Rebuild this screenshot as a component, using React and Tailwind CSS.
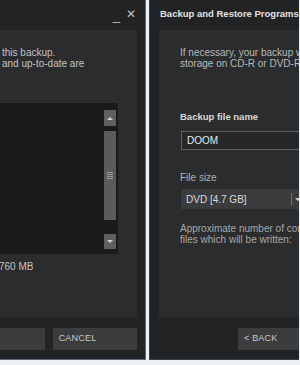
import React from 'react';

const font = "font-['Liberation_Sans',Arial,sans-serif]";

const LeftWindow = () => (
  <div className="w-[146px] h-[360px] bg-[#222324] border-r border-b border-[#5d6b78] flex flex-col overflow-hidden">
    {/* Title bar */}
    <div className="h-[30px] flex items-start justify-end pr-[9px] pt-[8px] gap-[6px] text-[#c4c4c4]">
      <span className="text-[13px] leading-[13px] mt-[1px]">_</span>
      <span className="text-[12px] leading-[12px]">✕</span>
    </div>

    {/* Content panel */}
    <div className="h-[287px] mr-[8px] bg-[#2b2c2d] flex flex-col">
      <div className="pt-[17px] pl-[2px] text-[10px] leading-[11px] text-[#c2c2c2] whitespace-nowrap">
        <div>this backup.</div>
        <div>and up-to-date are</div>
      </div>

      {/* List box */}
      <div className="mt-[34px] mr-[19px] h-[151px] bg-[#1a1a1b] flex justify-end pr-[2px] pt-[7px] pb-[5px]">
        <div className="w-[12px] flex flex-col">
          <div className="h-[16px] bg-[#5e5f60] flex items-center justify-center">
            <div className="w-0 h-0 border-l-[3px] border-r-[3px] border-b-[3px] border-l-transparent border-r-transparent border-b-[#d6d6d6]" />
          </div>
          <div className="mt-[5px] h-[89px] bg-[#5a5b5c] flex items-center justify-center">
            <div className="flex flex-col gap-[1px]">
              <div className="w-[6px] h-[1px] bg-[#9a9a9a]" />
              <div className="w-[6px] h-[1px] bg-[#9a9a9a]" />
              <div className="w-[6px] h-[1px] bg-[#9a9a9a]" />
              <div className="w-[6px] h-[1px] bg-[#9a9a9a]" />
            </div>
          </div>
          <div className="flex-1" />
          <div className="h-[15px] bg-[#5e5f60] flex items-center justify-center">
            <div className="w-0 h-0 border-l-[3px] border-r-[3px] border-t-[3px] border-l-transparent border-r-transparent border-t-[#d6d6d6]" />
          </div>
        </div>
      </div>

      <div className="mt-[7px] -ml-[1px] text-[10px] leading-[11px] text-[#c2c2c2] whitespace-nowrap">
        760 MB
      </div>
    </div>

    {/* Buttons */}
    <div className="mt-[11px] flex gap-[8px] pr-[8px]">
      <div className="w-[45px] h-[22px] bg-[#3b3c3d]" />
      <div className="w-[85px] h-[22px] bg-[#3b3c3d] flex items-center pl-[6px] text-[9px] text-[#c8c8c8] tracking-[0.2px]">
        CANCEL
      </div>
    </div>
  </div>
);

const RightWindow = () => (
  <div className="w-[150px] h-[360px] bg-[#222324] border-l border-b border-[#3a3f44] flex flex-col overflow-hidden">
    {/* Title bar */}
    <div className="h-[30px] pl-[10px] pt-[8px] text-[9.5px] leading-[12px] font-bold text-[#e4e4e4] whitespace-nowrap">
      Backup and Restore Programs
    </div>

    {/* Content panel */}
    <div className="h-[287px] ml-[9px] bg-[#2b2c2d] pl-[21px] flex flex-col text-[10px] leading-[11px] whitespace-nowrap">
      <div className="pt-[17px] text-[#b9b9b9]">
        <div>If necessary, your backup will be split across multiple</div>
        <div>storage on CD-R or DVD-R media.</div>
      </div>

      <div className="mt-[42px] font-bold text-[9.5px] text-[#d8d8d8]">Backup file name</div>
      <div className="mt-[9px] ml-[1px] h-[19px] w-[140px] bg-[#262728] border border-[#5f6061] flex items-center pl-[5px] text-[#ececec] text-[10px]">
        DOOM
      </div>

      <div className="mt-[22px] text-[#b0b0b0]">File size</div>
      <div className="mt-[6px] ml-[1px] h-[20px] w-[140px] bg-[#3a3b3c] flex items-center text-[#dcdcdc]">
        <span className="pl-[5px] w-[110px]">DVD [4.7 GB]</span>
        <div className="w-[1px] h-[12px] bg-[#707070]" />
        <div className="ml-[3px] w-0 h-0 border-l-[3px] border-r-[3px] border-t-[3px] border-l-transparent border-r-transparent border-t-[#cfcfcf]" />
      </div>

      <div className="mt-[14px] text-[#a8a8a8]">
        <div>Approximate number of compressed</div>
        <div>files which will be written:</div>
      </div>
    </div>

    {/* Buttons */}
    <div className="mt-[11px] flex pl-[88px]">
      <div className="w-[80px] h-[22px] bg-[#3b3c3d] flex items-center pl-[6px] text-[9px] text-[#c8c8c8] tracking-[0.2px] shrink-0">
        &lt; BACK
      </div>
    </div>
  </div>
);

export default function App() {
  return (
    <div className={`w-[300px] h-[365px] bg-[#eef1f3] flex gap-[3px] overflow-hidden ${font}`}>
      <LeftWindow />
      <RightWindow />
    </div>
  );
}
